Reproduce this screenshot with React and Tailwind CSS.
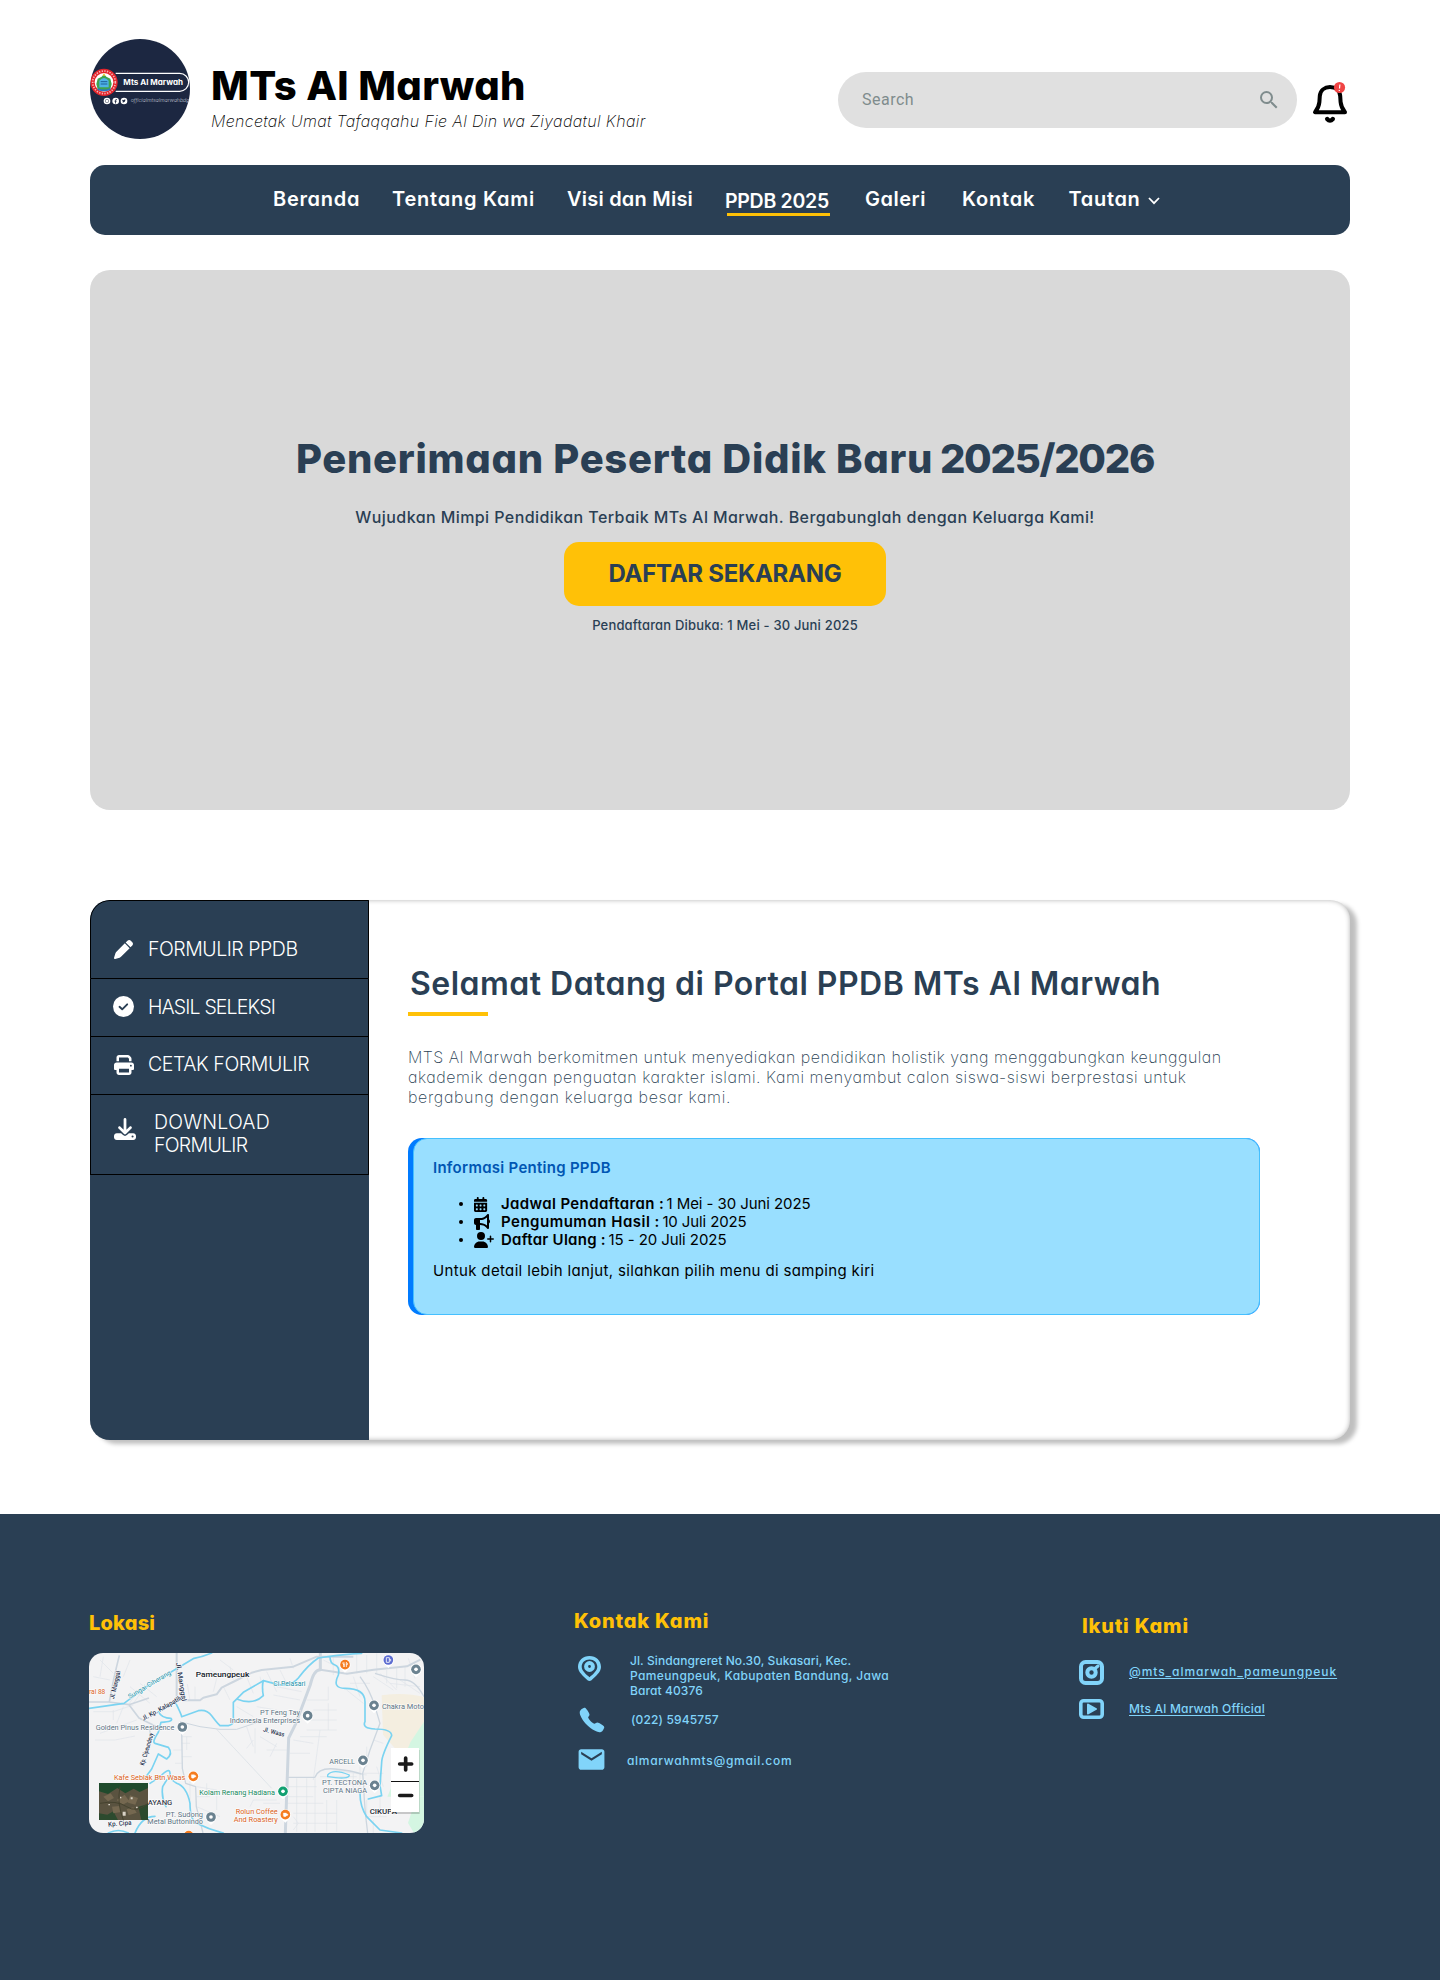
import { FaPen, FaPrint, FaDownload, FaCalendarDays, FaBullhorn, FaUserPlus } from "react-icons/fa6";
import { MdSearch, MdEmail } from "react-icons/md";
import { IoCall } from "react-icons/io5";

function Logo() {
  return (
    <svg className="block size-[100px] rounded-full bg-[#1c2741]" viewBox="15 -93 300 300">
      <path d="M92 10H284a27 27 0 0 1 0 54H92" fill="none" stroke="#fff" strokeWidth="3.5" />
      <circle cx="57" cy="37" r="41" fill="#e3242b" />
      <circle cx="57" cy="37" r="34" fill="none" stroke="#f6b5b5" strokeWidth="5" strokeDasharray="4 4" />
      <circle cx="57" cy="37" r="28" fill="#fff" />
      <path d="M57 12l7 8 12 6 4 16-4 16-19 6-19-6-4-16 4-16 12-6z" fill="#3fa34d" />
      <path d="M43 32q14-16 28 0v20H43z" fill="#4fb3e8" />
      <path d="M47 35h20M47 42h20" stroke="#1d5f9a" strokeWidth="3" />
      <path d="M38 54q19 9 38 0v6q-19 8-38 0z" fill="#2b78c2" />
      <path d="M57 9l4 8h-8z" fill="#f6c927" />
      <text x="115" y="46" fontSize="22" fontWeight="700" fill="#fff" textLength="179" lengthAdjust="spacingAndGlyphs">Mts Al Marwah</text>
      <g fill="#fff">
        <circle cx="66" cy="93" r="10" />
        <circle cx="92" cy="93" r="10" />
        <circle cx="117" cy="93" r="10" />
      </g>
      <rect x="61.500" y="88.500" width="9" height="9" rx="2.500" fill="none" stroke="#1c2741" strokeWidth="1.500" />
      <path d="M95.500 88.500q-4-1-4 3v9M88.500 93.500h6.500" fill="none" stroke="#1c2741" strokeWidth="2.500" />
      <path d="M112 97q8 2 9-6l1.500-2h-3q-3-2-3.500 2l-4-2q-1 4 2 6z" fill="#1c2741" />
      <text x="137" y="97" fontSize="16" fontStyle="italic" fontWeight="300" fill="#c3cad8" textLength="176" lengthAdjust="spacingAndGlyphs">officialmtsalmarwahbdg</text>
    </svg>
  );
}

function Bell() {
  return (
    <svg className="block h-[46px] w-[40px]" viewBox="0 0 40 46" fill="none">
      <path d="M5 32.300H35C32 28.500 31 26.500 30.600 22L30.200 16C29.700 10.500 25.500 7 20 7S10.300 10.500 9.800 16L9.400 22C9 26.500 8 28.500 5 32.300Z" stroke="#000" strokeWidth="4" strokeLinejoin="round" />
      <path d="M17.200 39q2.800 3.200 5.600 0" stroke="#000" strokeWidth="4.400" strokeLinecap="round" />
      <circle cx="29.500" cy="7.500" r="5.600" fill="#f04444" />
      <path d="M29.900 4.500l-.4 4M29.300 10v1" stroke="#fff" strokeWidth="1.200" />
    </svg>
  );
}

const nav = [
  { label: "Beranda", cls: "w-[119px] tracking-[0.7px]" },
  { label: "Tentang Kami", cls: "w-[175px] tracking-[0.77px]" },
  { label: "Visi dan Misi", cls: "w-[158px] tracking-[0.22px]" },
  { label: "PPDB 2025", active: true },
  { label: "Galeri", cls: "w-[97px] tracking-[0.5px]" },
  { label: "Kontak", cls: "w-[106.500px] tracking-[0.77px]" },
  { label: "Tautan", cls: "w-[78px] tracking-[0.67px]" },
];

function Header() {
  return (
    <header className="flex h-[165px] pl-[90px]">
      <div className="mt-[39px] w-[121px]"><Logo /></div>
      <div className="mt-[61px] w-[627px] whitespace-nowrap">
        <h1 className="text-[40px] leading-[50px] font-extrabold tracking-[0.4px] text-black">MTs Al Marwah</h1>
        <p className="text-[16px] leading-[21px] font-extralight tracking-[0.36px] text-black italic">Mencetak Umat Tafaqqahu Fie Al Din wa Ziyadatul Khair</p>
      </div>
      <div className="mt-[72px] flex h-[56px] w-[459px] items-center justify-between rounded-full bg-[#e0e0e0] pr-[16px] pl-[24px] text-[#7f8c8d]">
        <span className="font-['Roboto'] text-[16px] tracking-[0.5px]">Search</span>
        <MdSearch className="size-6" />
      </div>
      <div className="mt-[80px] ml-[13px]"><Bell /></div>
    </header>
  );
}

function Nav() {
  return (
    <nav className="mx-[90px] flex h-[70px] rounded-[15px] bg-[#2a3f54] pl-[183px] text-[20px] leading-[28px] font-semibold whitespace-nowrap text-white">
      {nav.map((n) =>
        n.active ? (
          <div key={n.label} className="w-[140px] pt-[22px]">
            <div className="text-[19.5px] font-semibold tracking-[-0.28px]">{n.label}</div>
            <div className="-mt-[2px] ml-[2px] h-[3px] w-[103px] bg-[#ffc107]" />
          </div>
        ) : (
          <div key={n.label} className={"pt-[20px] " + n.cls}>{n.label}</div>
        )
      )}
      <svg className="mt-[31px] h-[10px] w-[14px]" viewBox="0 0 14 10" fill="none">
        <path d="M2 2l5 5.200L12 2" stroke="#fff" strokeWidth="1.800" />
      </svg>
    </nav>
  );
}

function Hero() {
  return (
    <section className="mx-[90px] mt-[35px] flex h-[540px] flex-col items-center rounded-[20px] bg-[#d9d9d9] pl-[10px] whitespace-nowrap text-[#2a3f54]">
      <h2 className="mt-[164px] text-[40px] leading-[50px] font-extrabold">
        <span className="tracking-[0.7px]">Penerimaan Peserta Didik Baru</span>{" "}
        <span className="-ml-[2px] tracking-[-1.3px]">2025/2026</span>
      </h2>
      <p className="mt-[23px] text-[16px] leading-[20px] font-medium tracking-[0.42px]">Wujudkan Mimpi Pendidikan Terbaik MTs Al Marwah. Bergabunglah dengan Keluarga Kami!</p>
      <button className="mt-[15px] h-[64px] w-[322px] rounded-[15px] bg-[#ffc107] text-[24px] leading-[30px] font-bold tracking-[-0.27px]">DAFTAR SEKARANG</button>
      <p className="mt-[9px] text-[13px] leading-[20px] font-medium tracking-[0.18px]">Pendaftaran Dibuka: 1 Mei - 30 Juni 2025</p>
    </section>
  );
}

function CheckCircle() {
  return (
    <svg className="block size-[21px]" viewBox="0 0 21 21">
      <circle cx="10.500" cy="10.500" r="10.500" fill="#fff" />
      <path d="M6.500 10.800l2.700 2.500 5-5" fill="none" stroke="#2a3f54" strokeWidth="1.900" strokeLinecap="round" strokeLinejoin="round" />
    </svg>
  );
}

function Sidebar() {
  return (
    <aside className="w-[279px] overflow-hidden rounded-l-[20px] bg-[#2a3f54] text-[19.5px] leading-[24px] font-light whitespace-nowrap text-white">
      <div className="flex h-[79px] rounded-tl-[20px] border border-black pl-[23px]">
        <FaPen className="mt-[39px] size-[19px]" />
        <span className="mt-[36px] ml-[15px] tracking-[-0.47px]">FORMULIR PPDB</span>
      </div>
      <div className="flex h-[58px] border-x border-b border-black pl-[22px]">
        <div className="mt-[17px]"><CheckCircle /></div>
        <span className="mt-[16px] ml-[14px] tracking-[-0.85px]">HASIL SELEKSI</span>
      </div>
      <div className="flex h-[58px] border-x border-b border-black pl-[23px]">
        <FaPrint className="mt-[18px] size-[20px]" />
        <span className="mt-[15px] ml-[14px] tracking-[-0.4px]">CETAK FORMULIR</span>
      </div>
      <div className="flex h-[80px] border-x border-b border-black pl-[23px]">
        <FaDownload className="mt-[23px] size-[22px]" />
        <span className="mt-[16px] ml-[18px] leading-[22.500px]">
          <span className="block tracking-[0.2px]">DOWNLOAD</span>
          <span className="block tracking-[-0.7px]">FORMULIR</span>
        </span>
      </div>
    </aside>
  );
}

const dates = [
  { Icon: FaCalendarDays, label: "Jadwal Pendaftaran :", lc: "tracking-[0.37px]", value: "1 Mei - 30 Juni 2025", vc: "tracking-[-0.08px]", ic: "h-[15px] w-[15px]" },
  { Icon: FaBullhorn, label: "Pengumuman Hasil :", lc: "tracking-[0.5px]", value: "10 Juli 2025", vc: "tracking-[-0.12px]", ic: "h-[16px] w-[16px]" },
  { Icon: FaUserPlus, label: "Daftar Ulang :", lc: "tracking-[0.27px]", value: "15 - 20 Juli 2025", vc: "tracking-[-0.07px]", ic: "h-[16px] w-[20px]" },
];

function Portal() {
  return (
    <section className="mx-[90px] mt-[90px] flex h-[540px] rounded-[20px] bg-white shadow-[7px_4px_4px_rgba(0,0,0,0.25),inset_0_0_5px_rgba(0,0,0,0.3)]">
      <Sidebar />
      <div className="pl-[39px] whitespace-nowrap">
        <h2 className="mt-[64px] ml-[2px] text-[32px] leading-[40px] font-semibold tracking-[0.48px] text-[#2a3f54]">Selamat Datang di Portal PPDB MTs Al Marwah</h2>
        <div className="mt-[8px] h-[4px] w-[80px] bg-[#ffc107]" />
        <div className="mt-[31px] text-[16px] leading-[20px] font-extralight text-[#2a3f54]">
          <p className="tracking-[0.48px]">MTS Al Marwah berkomitmen untuk menyediakan pendidikan holistik yang menggabungkan keunggulan</p>
          <p className="tracking-[0.54px]">akademik dengan penguatan karakter islami. Kami menyambut calon siswa-siswi berprestasi untuk</p>
          <p className="tracking-[0.64px]">bergabung dengan keluarga besar kami.</p>
        </div>
        <div className="mt-[31px] h-[177px] w-[852px] rounded-[14px] bg-[#007bff] pl-[5px]">
          <div className="h-full rounded-[14px] border border-[#45c0ff] bg-[#99dfff] pt-[20px] pl-[19px] text-[15px] leading-[18px] text-black">
            <h3 className="font-semibold tracking-[0.27px] text-[#0056b3]">Informasi Penting PPDB</h3>
            <ul className="mt-[18px]">
              {dates.map(({ Icon, label, lc, value, vc, ic }) => (
                <li key={label} className="flex items-center">
                  <span className="ml-[26px] size-[4px] rounded-full bg-black" />
                  <span className="ml-[11px] w-[27px]"><Icon className={ic} preserveAspectRatio="xMinYMid meet" /></span>
                  <b className={"font-semibold " + lc}>{label}</b>
                  <span className={"ml-[2.500px] " + vc}>{value}</span>
                </li>
              ))}
            </ul>
            <p className="mt-[13px] tracking-[0.35px]">Untuk detail lebih lanjut, silahkan pilih menu di samping kiri</p>
          </div>
        </div>
      </div>
    </section>
  );
}

function Pin({ x, y, color = "#6b8290", children }) {
  return (
    <g transform={`translate(${x} ${y})`}>
      <path d="M0 24l-9-9a17 17 0 1 1 18 0z" fill="#fff" />
      <circle r="14.500" fill={color} />
      {children || <circle r="5.500" fill="#fff" />}
    </g>
  );
}

function Label({ x, y, w, color = "#5b7282", size = 22, anchor = "start", weight = 400, rotate = 0, children }) {
  return (
    <text x={x} y={y} fill={color} fontSize={size} fontWeight={weight} textAnchor={anchor} textLength={w} lengthAdjust="spacingAndGlyphs" transform={`rotate(${rotate} ${x} ${y})`} stroke="#fff" strokeWidth="3" paintOrder="stroke">
      {children}
    </text>
  );
}

function Cup() {
  return <path d="M-6-5H3V3Q3 6-1.500 6T-6 3zM3-3q5 0 5 3T3 3" fill="#fff" stroke="#fff" strokeWidth="1" />;
}

function LocationMap() {
  return (
    <svg className="block h-[180px] w-[335px] rounded-[14px] bg-[#f3f3f4] font-['Roboto']" viewBox="27 39 1005 540">
      <path d="M905 166q70-10 127 5v90q-20 20-30 55l-18 20-40-12-35-40z" fill="#f4eee0" />
      <path d="M1032 245v225h-110l70-165z" fill="#d4f6e2" />
      <path d="M1010 470h22v109h-30l-18-30z" fill="#d4f6e2" />
      <g fill="none" stroke="#dfe4ea" strokeWidth="2">
        <path d="M40 215h60l60-20M60 280l110-40M45 300h60l60-12M100 210v30M130 200l-20 50M150 140l60 50M165 165l-20 30M180 130l50 40M210 120l-50 70M60 60l40 40M40 110l50 10M70 50l-10 60M150 60l-20 50" />
        <path d="M310 180v-60M330 182l-8-50M345 180v-40M400 155l10-40M430 140l20 40M460 120l-10-40M500 110l20 50M540 110l10 40M560 95l30 60M600 90l20 40M640 85l-10-30M390 90l40 20M420 60l40 30" />
        <path d="M305 290h30M305 310h25M305 330h-25M305 350h30M305 370h-20M320 290v40M330 420v60M350 440l60 10M350 470h40M350 500l70 30M380 430v40M410 450v60" />
        <path d="M590 140l75 15M580 165l80 15M680 180h65v-40M700 210h70M690 240h80M680 270h90M660 290h80M745 190v80M720 270l-20 150M640 300l60 10M630 340h60" />
        <path d="M470 200l50 30M480 240l60 10M500 260l20 60M525 265v75M540 290l50 30M520 300l-20 25M560 330h60M590 310l-20 40M530 200l60 10" />
        <path d="M620 440h90M620 470h80M620 490h110M650 415v160M680 415v160M705 415v160M740 480v95M770 480v95M640 520h130M640 550h130M640 530l15 20-15 20M590 480h-70l-10 20M600 490h-50" />
        <path d="M860 320v60M880 300l30 10M840 380v60M850 400h60M890 380l20 60M820 400v50M860 480v50h60M880 540v39M760 390l100 15M720 410h110M900 470v60" />
        <path d="M730 60l60 30M760 45v60M830 40v60M860 45v55M890 40v60M920 90v40M950 85v60M975 80v60M880 110l60 40M900 100l50 50M960 120l60 40M930 130l90 10M985 55l20 60M820 110l20 60M810 130h60M800 150l50 40" />
      </g>
      <g fill="none" stroke="#cdd6df" strokeLinejoin="round">
        <path d="M27 186h60l60 8 30 40 50 25M88 186q10-60 30-140M147 194l60-20" strokeWidth="5" />
        <path d="M290 39v130l20 12h50l10-8 40-10 15-20 40-20 50-25 30-8 95-10 70-30h110" strokeWidth="6" />
        <path d="M305 265l2 120 10 45 30 10 2 60 20 79M210 260v40" strokeWidth="4" />
        <path d="M300 245l60 15 60 8h50l60-20" strokeWidth="3" />
        <path d="M721 39v50q-20 0-30 45l-45 120-20 40-10 285" strokeWidth="9" />
        <path d="M721 89l80 12 80-12 100-10 40-20" strokeWidth="6" />
        <path d="M840 110q30 40 45 90l15 50-30 80-22 70 3 40q2 60 12 139" strokeWidth="4" />
        <path d="M885 100q60 20 90 20t57 50M620 412h85q10-30 60-25t80 15" strokeWidth="4" />
        <path d="M410 268L575 445" strokeWidth="1.500" />
      </g>
      <g fill="none" stroke="#7ad3f1" strokeWidth="5" strokeLinecap="round" strokeLinejoin="round">
        <path d="M27 205q70-10 105-15l60-45 100-60 50-30q30-6 53-16" />
        <path d="M235 215q10 20 38 20 10 10-30 12l-8 30q-20 30-10 33l40 12q15 20-5 35l-25-15-20 45-15 20" />
        <path d="M285 185q20 40 20 45l50-18q25-5 40 15t25 30h25q20-5 15-25v-45l30-30 60-35q-5 20 0 45-30 30-80 10" />
        <path d="M550 122l45 12q40 5 60-20 30-40 60-60 80-12 130-14M750 50q0 20 15 25t10 30q-20 40 20 40 60 0 60 40v60q-10 20 30 22 50 0 50 20-30 60-30 80l-5 70 5 30-40 10" />
        <path d="M743 405q15-20 65 0 0 15-65 5z" strokeWidth="4" />
        <path d="M210 430l30-20q30-30 30-10 0 20 20 30 30 10 40 60 0 50 20 60 40 20 80 29M165 579q20-50 60-50M85 579q30-15 60 0M260 420l-12 20q-5 30 10 60" />
        <path d="M840 460q0 40 20 70l40 40 65 9" />
      </g>
      <Label x="347" y="110" w="161" color="#111827" size="24" weight="500">Pameungpeuk</Label>
      <Label x="580" y="138" w="96" color="#138da5" size="20">Ci Pelasari</Label>
      <Label x="149" y="177" w="146" color="#138da5" size="20" rotate="-31">Sungai Ciherang</Label>
      <Label x="102" y="178" w="86" color="#26324f" size="20" weight="500" rotate="-77">Jl. Manggal</Label>
      <Label x="288" y="68" w="118" color="#26324f" size="20" weight="500" rotate="81">Jl. Manggal</Label>
      <Label x="190" y="243" w="138" color="#26324f" size="20" weight="500" rotate="-29">Jl. Kp. Kalapatilu</Label>
      <Label x="192" y="377" w="100" color="#26324f" size="20" weight="500" rotate="-73">Kp. Cipeundeuy</Label>
      <Label x="548" y="274" w="66" color="#26324f" size="19" weight="500" rotate="14">Jl. Waas</Label>
      <Label x="27" y="162" w="49" color="#d9601a">ral 88</Label>
      <Label x="47" y="270" w="236">Golden Pinus Residence</Label>
      <Label x="660" y="226" w="120" anchor="end">PT Feng Tay</Label>
      <Label x="660" y="248" w="211" anchor="end">Indonesia Enterprises</Label>
      <Label x="906" y="207" w="126">Chakra Moto</Label>
      <Label x="748" y="371" w="77">ARCELL</Label>
      <Label x="861" y="436" w="135" anchor="end">PT. TECTONA</Label>
      <Label x="861" y="458" w="132" anchor="end">CIPTA NIAGA</Label>
      <Label x="102" y="419" w="214" color="#d9601a">Kafe Seblak Btn Waas</Label>
      <Label x="358" y="465" w="227" color="#12875a">Kolam Renang Hadiana</Label>
      <Label x="593" y="523" w="126" color="#d9601a" anchor="end">Rolun Coffee</Label>
      <Label x="593" y="545" w="132" color="#d9601a" anchor="end">And Roastery</Label>
      <Label x="369" y="531" w="112" anchor="end">PT. Sudong</Label>
      <Label x="369" y="552" w="167" anchor="end">Metal Buttonindo</Label>
      <Label x="203" y="494" w="74" color="#3c4450" size="21" weight="500">AYANG</Label>
      <Label x="85" y="560" w="70" color="#26324f" size="20" weight="500" rotate="-5">Kp. Cipa</Label>
      <Label x="869" y="523" w="82" color="#222a35" size="21" weight="500">CIKUPA</Label>
      <Pin x="307" y="261" />
      <Pin x="683" y="227" />
      <Pin x="882" y="196" />
      <Pin x="1008" y="88" />
      <Pin x="849" y="361" />
      <Pin x="884" y="436" />
      <Pin x="393" y="531" />
      <Pin x="609" y="454" color="#12a071" />
      <Pin x="340" y="409" color="#f57c1f"><Cup /></Pin>
      <Pin x="616" y="524" color="#f57c1f"><Cup /></Pin>
      <Pin x="326" y="587" color="#f57c1f"><Cup /></Pin>
      <Pin x="795" y="74" color="#f57c1f"><path d="M-6-7v5q3 3 3 0v9V-7M4-7v14M4-7q5 3 3 7H4" fill="none" stroke="#fff" strokeWidth="2.500" /></Pin>
      <Pin x="925" y="60" color="#5b6bd0"><path d="M-6 7V-7H3V7zM3-2h4v6" fill="none" stroke="#fff" strokeWidth="2.500" /></Pin>
      <g>
        <rect x="57" y="429" width="147" height="111" fill="#5a5340" />
        <path d="M57 429h147v15l-25 12-18-10-25 14-24-16-28 18-27-8z" fill="#1f4a2c" />
        <path d="M57 520l25 4 18-10 14 26H57zM175 500l29-8v48h-20z" fill="#2c4a2e" />
        <path d="M70 470l22-10 10 14-18 10zM110 480l24-16 14 20-20 10zM150 466l24 8-8 20-22-6zM96 500l22-2 6 18-24 4zM140 508l20-6 10 16-24 8z" fill="#756850" />
        <path d="M128 515h9v12h-9zM152 472h6v6h-6zM85 492h5v4h-5zM120 470h4v5h-4zM168 500h5v5h-5z" fill="#d8d2c6" />
        <path d="M60 490q50-10 80 10t64-10M120 440q-10 50 10 100" fill="none" stroke="#45432f" strokeWidth="3" />
      </g>
      <rect x="935" y="330" width="84" height="192" fill="#000" opacity="0.18" />
      <rect x="933" y="324" width="84" height="192" fill="#fff" />
      <path d="M933 424.500h84" stroke="#111" strokeWidth="3" />
      <path d="M959 372h36M977 354v36M959 466.500h36" stroke="#1a1a1a" strokeWidth="11" strokeLinecap="round" />
    </svg>
  );
}

function PinIcon() {
  return (
    <svg className="block h-[25px] w-[23px]" viewBox="0 0 23 25">
      <path fillRule="evenodd" fill="#81d4fa" d="M11.500 0C5 0 0 4.600 0 11c0 5 5.500 9.500 9.500 13.200q2 1.600 4 0C17.500 20.500 23 16 23 11 23 4.600 18 0 11.500 0zM11.500 3.500c4.500 0 7.800 3 7.800 7.400 0 3.600-4.300 7.200-7.800 10.300-3.500-3.100-7.800-6.700-7.800-10.300 0-4.400 3.300-7.400 7.800-7.400z" />
      <circle cx="11.500" cy="10.500" r="3.400" fill="none" stroke="#81d4fa" strokeWidth="4" />
    </svg>
  );
}

function InstagramIcon() {
  return (
    <svg className="block h-[25px] w-[25px]" viewBox="0 0 25 25" fill="none" stroke="#81d4fa">
      <rect x="2" y="2" width="21" height="21" rx="4.500" strokeWidth="4" />
      <circle cx="12.500" cy="12.500" r="4.200" strokeWidth="4" />
      <path d="M16 8.500l3-2.500" strokeWidth="3.200" strokeLinecap="round" />
    </svg>
  );
}

function YoutubeIcon() {
  return (
    <svg className="block h-[20px] w-[25px]" viewBox="0 0 25 20">
      <rect x="1.800" y="1.800" width="21.400" height="16.400" rx="2.800" fill="none" stroke="#81d4fa" strokeWidth="3.600" />
      <path d="M9 5.500l8 4.500-8 4.500z" fill="#81d4fa" stroke="#81d4fa" strokeWidth="2" strokeLinejoin="round" />
    </svg>
  );
}

function Footer() {
  return (
    <footer className="mt-[74px] flex h-[466px] bg-[#2a3f54] pl-[89px] text-[12px] font-medium whitespace-nowrap text-[#81d4fa]">
      <div className="w-[485px] pt-[95px]">
        <h3 className="text-[20px] leading-[28px] font-extrabold tracking-[0.2px] text-[#ffc107]">Lokasi</h3>
        <div className="mt-[16px]"><LocationMap /></div>
      </div>
      <div className="w-[505px] pt-[93px]">
        <h3 className="text-[20px] leading-[28px] font-extrabold tracking-[0.8px] text-[#ffc107]">Kontak Kami</h3>
        <div className="mt-[21px] flex pl-[4px]">
          <PinIcon />
          <p className="-mt-[3px] ml-[29px] leading-[15px]">
            <span className="block tracking-[0.08px]">Jl. Sindangreret No.30, Sukasari, Kec.</span>
            <span className="block tracking-[0.37px]">Pameungpeuk, Kabupaten Bandung, Jawa</span>
            <span className="block tracking-[0.1px]">Barat 40376</span>
          </p>
        </div>
        <div className="mt-[8px] flex items-center pl-[4px]">
          <IoCall className="size-[28px]" />
          <span className="ml-[25px] tracking-[0.15px]">(022) 5945757</span>
        </div>
        <div className="mt-[10px] flex items-center pl-[2px]">
          <MdEmail className="size-[31px]" />
          <span className="mt-[3px] ml-[20px] tracking-[0.7px]">almarwahmts@gmail.com</span>
        </div>
      </div>
      <div className="pt-[98px]">
        <h3 className="ml-[3px] text-[20px] leading-[28px] font-extrabold tracking-[0.8px] text-[#ffc107]">Ikuti Kami</h3>
        <div className="mt-[20px] flex h-[25px] items-center">
          <InstagramIcon />
          <a className="-mt-[2px] ml-[25px] tracking-[0.93px] underline underline-offset-2">@mts_almarwah_pameungpeuk</a>
        </div>
        <div className="mt-[14px] flex h-[20px] items-center">
          <YoutubeIcon />
          <a className="ml-[25px] tracking-[0.2px] underline underline-offset-2">Mts Al Marwah Official</a>
        </div>
      </div>
    </footer>
  );
}

export default function App() {
  return (
    <div className="h-[1980px] w-[1440px] overflow-hidden bg-white font-['Inter',sans-serif] [font-feature-settings:'cv11']">
      <Header />
      <Nav />
      <Hero />
      <Portal />
      <Footer />
    </div>
  );
}
